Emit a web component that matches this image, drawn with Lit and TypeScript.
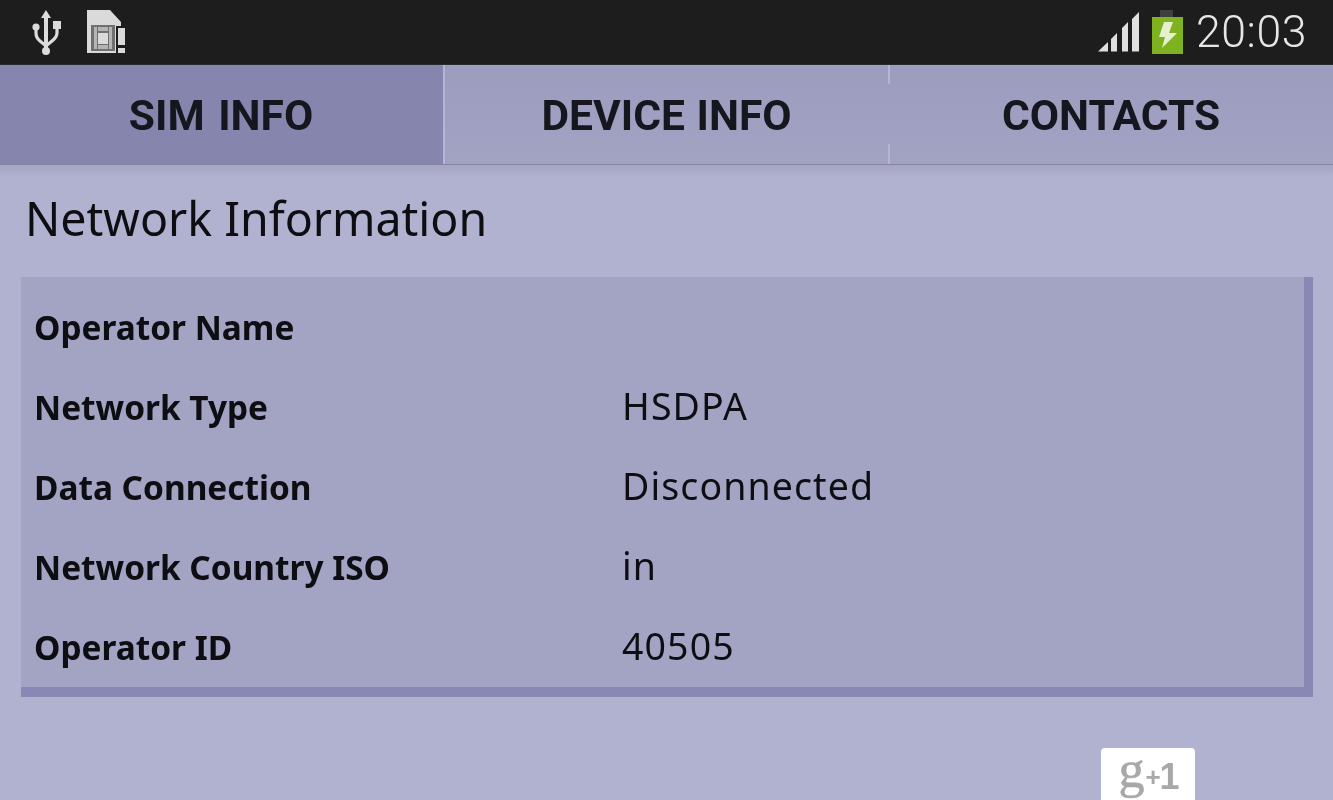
import { LitElement, html, css } from "lit";
import { customElement } from "lit/decorators.js";

const rows: [string, string][] = [
  ["Operator Name", ""],
  ["Network Type", "HSDPA"],
  ["Data Connection", "Disconnected"],
  ["Network Country ISO", "in"],
  ["Operator ID", "40505"],
];

@customElement("app-root")
export class AppRoot extends LitElement {
  static styles = css`
    :host { display: block; width: 1333px; height: 800px; overflow: hidden; background: #b1b1d0; font-family: "Noto Sans", "Open Sans", sans-serif; color: #0d0d12; filter: blur(0.4px); }
    .status { height: 64px; background: #1d1d1d; border-bottom: 1px solid #2b2b2e; display: flex; align-items: center; padding: 0 26px 0 30px; }
    .status .left { display: flex; align-items: center; gap: 24px; flex: 1; }
    .status svg { display: block; }
    .clock { font-family: Roboto, sans-serif; font-size: 44.5px; font-weight: 300; color: #e6e6e6; margin-left: 13px; letter-spacing: 0.6px; line-height: 64px; }
    .signal { margin-right: 13px; }
    .tabs { height: 99px; display: grid; grid-template-columns: 444px 445px 444px; background: linear-gradient(#9c9cbf, #a2a2c3); border-bottom: 1px solid #85859f; }
    .tab { position: relative; display: flex; align-items: center; justify-content: center; padding-top: 2px; box-sizing: border-box; font-family: Roboto, sans-serif; font-weight: 700; font-size: 42.5px; color: #16161e; word-spacing: 1px; }
    .tab.sel { background: #8685ad; }
    .tab.sel { padding-right: 2px; word-spacing: 3px; }
    .tab .t, .tab .b { position: absolute; right: -1px; width: 2px; background: #b6b6d2; }
    .tab .t { top: 0; height: 19px; }
    .tab .b { bottom: 0; height: 20px; }
    .tab.sel .t { height: 100%; }
    .shadow { height: 12px; background: linear-gradient(#a5a5c2, #b1b1d0); margin-bottom: -12px; }
    .content { padding: 0 20px 0 21px; }
    h1 { margin: 0 0 22px; padding: 22px 0 0 4px; font-size: 46.5px; font-weight: 400; height: 90px; line-height: 62px; box-sizing: border-box; }
    .card { background: #a3a3c4; border-right: 9px solid #8988b4; border-bottom: 10px solid #8988b4; width: 1283px; padding-top: 10px; height: 400px; box-sizing: content-box; }
    .row { height: 80px; display: grid; grid-template-columns: 588px 1fr; align-items: center; padding-left: 13px; font-size: 37.5px; }
    .row .k { font-weight: 700; font-size: 33.4px; }
    .row .v { letter-spacing: 1.1px; padding-bottom: 3px; }
    .foot { display: flex; padding: 51px 0 0 1080px; }
    .plus { width: 94px; height: 53px; background: #fff; border-radius: 4px 4px 0 0; color: #a8a8a8; display: flex; align-items: flex-start; justify-content: center; line-height: 1; }
    .plus .g { font-family: "Liberation Serif", serif; font-size: 52px; font-weight: 400; line-height: 44px; margin-top: 0; -webkit-text-stroke: 0.6px #a8a8a8; }
    .plus .a { font-family: "Liberation Sans", sans-serif; font-size: 26px; font-weight: 700; line-height: 30px; margin: 14px 0 0 1px; }
    .plus .o { font-family: "Liberation Sans", sans-serif; font-size: 36px; font-weight: 700; line-height: 36px; margin: 11px 0 0 -1px; letter-spacing: -2px; }
  `;

  render() {
    return html`
      <div class="status">
        <div class="left">
          <svg width="32" height="48" viewBox="0 0 32 48" fill="#dcdcdc" stroke="#dcdcdc">
            <path d="M16 2l5 8h-10z" stroke="none"/>
            <path d="M16 8v34" stroke-width="4" fill="none"/>
            <path d="M6 19v6q0 5 4 8l6 5 6-5q5-4 5-8v-8" stroke-width="3.2" fill="none"/>
            <circle cx="6" cy="19" r="3.6" stroke="none"/>
            <rect x="23" y="13" width="8" height="8" stroke="none"/>
            <circle cx="16" cy="43" r="4" stroke="none"/>
          </svg>
          <svg width="40" height="44" viewBox="0 0 40 44">
            <path d="M1 0h23l11 12v4h-5v27H1z" fill="#dadada"/>
            <path d="M5 15h24v26H5z" fill="#707070"/>
            <path d="M8 17h3v22H8zM23 17h3v22h-3zM12 17h10v4H12zM12 35h10v4H12z" fill="#b4b4b4"/>
            <path d="M12 23h10v11H12z" fill="#dadada"/>
            <path d="M32 18h7v17h-7zM32 38h7v5h-7z" fill="#dadada"/>
          </svg>
        </div>
        <svg class="signal" width="41" height="40" viewBox="0 0 41 40" fill="#e0e0e0">
          <path d="M0 39.500L10 30v9.500zM13 27l6-6v18.500h-6zM24 16l6-6v29.500h-6zM34 7l7-7v39.500h-7z"/>
        </svg>
        <svg width="31" height="44" viewBox="0 0 31 44">
          <rect x="8" y="0" width="13" height="7" fill="#3f3f3f"/>
          <rect x="0" y="7" width="31" height="37" fill="#7fb21f"/>
          <path d="M12 12h9l-4 11h8L10 38l3-11H7z" fill="#e6efce"/>
        </svg>
        <div class="clock">20:03</div>
      </div>
      <div class="tabs">
        <div class="tab sel">SIM INFO<i class="t"></i></div>
        <div class="tab">DEVICE INFO<i class="t"></i><i class="b"></i></div>
        <div class="tab">CONTACTS</div>
      </div>
      <div class="shadow"></div>
      <div class="content">
        <h1>Network Information</h1>
        <div class="card">
          ${rows.map(([k, v]) => html`<div class="row"><span class="k">${k}</span><span class="v">${v}</span></div>`)}
        </div>
        <div class="foot">
          <div class="plus"><span class="g">g</span><span class="a">+</span><span class="o">1</span></div>
        </div>
      </div>
    `;
  }
}
